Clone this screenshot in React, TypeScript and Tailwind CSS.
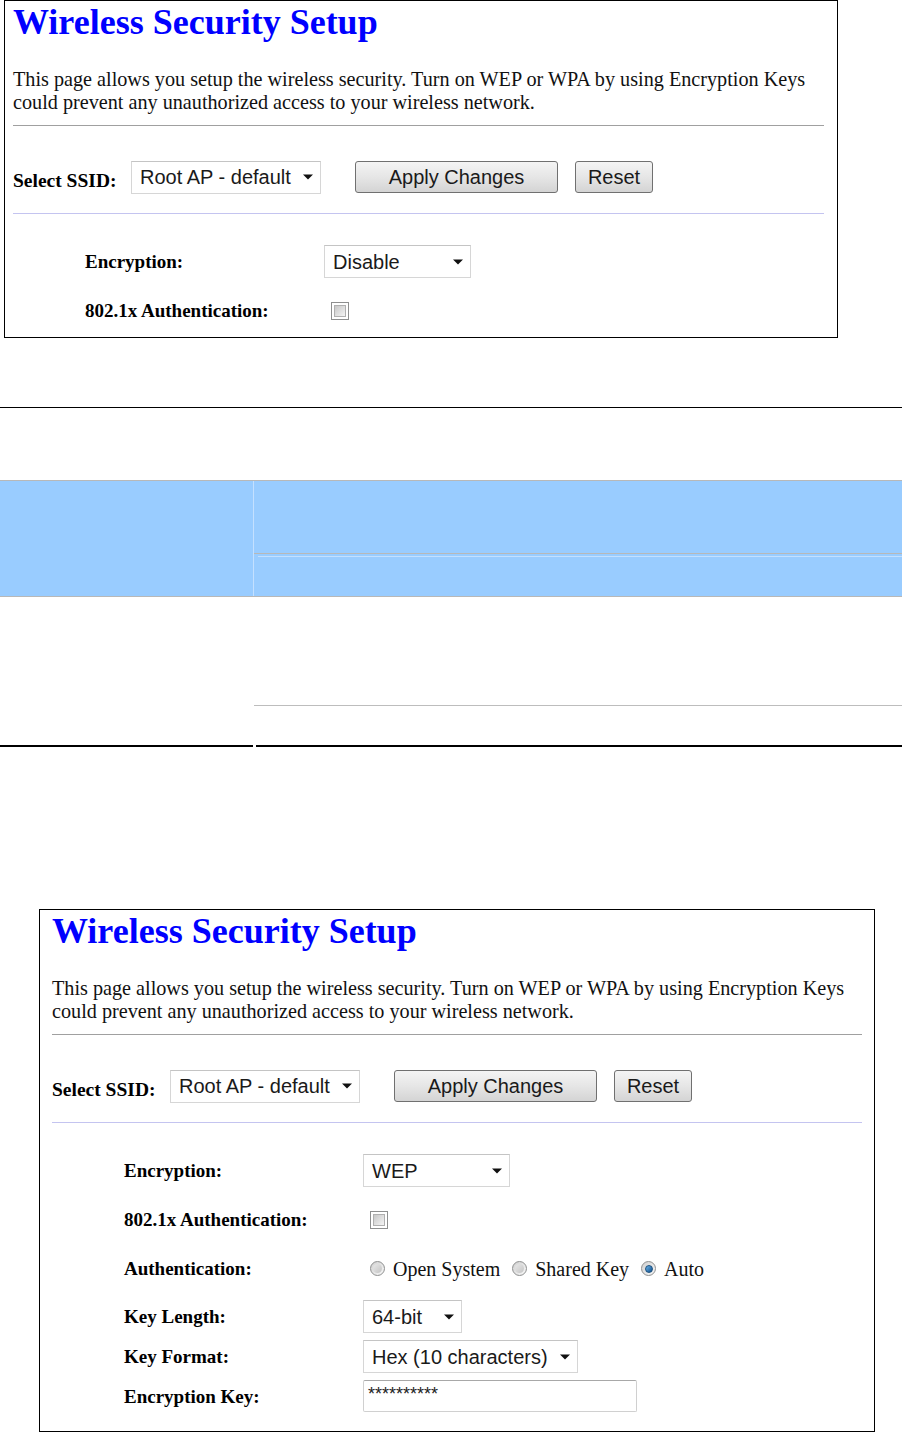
import React from "react";

const SERIF = "font-['Liberation_Serif','Times_New_Roman',serif]";
const SANS = "font-['Liberation_Sans',Arial,sans-serif]";

function Arrow() {
  return (
    <svg width="10" height="6" viewBox="0 0 10 6" className="shrink-0">
      <path d="M0 0.5h10L5 5.5z" fill="#111" />
    </svg>
  );
}

function Select({ text, w }: { text: string; w: string }) {
  return (
    <div
      className={`${w} h-[33px] flex items-center justify-between pl-[8px] pr-[7px] bg-white border border-[#d6d6d6] border-t-[#c4c4c4] ${SANS} text-[20px] text-[#1a1a1a] leading-none`}
    >
      <span className="whitespace-nowrap">{text}</span>
      <Arrow />
    </div>
  );
}

function Button({ text, w }: { text: string; w: string }) {
  return (
    <div
      className={`${w} h-[32px] flex items-center justify-center rounded-[3px] border border-[#707070] bg-gradient-to-b from-[#f4f4f4] via-[#e6e6e6] to-[#d4d4d4] ${SANS} text-[20px] text-[#1a1a1a] leading-none`}
    >
      {text}
    </div>
  );
}

function Checkbox() {
  return (
    <div className="w-[18px] h-[18px] border border-[#8e8f8f] bg-white p-[2px] ml-[7px]">
      <div className="w-full h-full border border-[#b0b0b0] bg-gradient-to-br from-[#c8c8c8] to-[#f4f4f4]" />
    </div>
  );
}

function Radio({ on }: { on?: boolean }) {
  return (
    <div className="w-[15px] h-[15px] rounded-full border border-[#8e8f8f] bg-gradient-to-br from-[#d0d0d0] to-[#f8f8f8] flex items-center justify-center shrink-0">
      {on ? (
        <div className="w-[8px] h-[8px] rounded-full bg-gradient-to-br from-[#6ab4ea] to-[#0d4f8c] border border-[#1c4f7c]" />
      ) : (
        <div className="w-[9px] h-[9px] rounded-full bg-gradient-to-br from-[#e8e8e8] to-[#c4c4c4]" />
      )}
    </div>
  );
}

function Label({ children }: { children: React.ReactNode }) {
  return (
    <div className={`ml-[72px] w-[239px] ${SERIF} font-bold text-[19px] text-black leading-none`}>
      {children}
    </div>
  );
}

function Panel({ wep }: { wep: boolean }) {
  const outer = wep
    ? "ml-[39px] w-[836px] h-[523px] mt-[162px]"
    : "ml-[4px] w-[834px] h-[338px]";
  const inner = wep ? "pl-[12px] pr-[12px]" : "pl-[8px] pr-[13px]";
  return (
    <div className={`${outer} border border-black bg-white`}>
      <div className={`${inner} flex flex-col`}>
        <h1
          className={`mt-[1px] ${SERIF} font-bold text-[36px] leading-[40px] text-[#0000ff]`}
        >
          Wireless Security Setup
        </h1>
        <p className={`mt-[26px] ${SERIF} text-[20.2px] leading-[23px] text-[#111] whitespace-nowrap`}>
          This page allows you setup the wireless security. Turn on WEP or WPA by using Encryption Keys
          <br />
          could prevent any unauthorized access to your wireless network.
        </p>
        <div className="mt-[11px] h-px bg-[#a0a0a0]" />
        <div className="mt-[34px] h-[34px] flex items-center">
          <div className={`w-[118px] pt-[7px] ${SERIF} font-bold text-[19.5px] text-black leading-none`}>
            Select SSID:
          </div>
          <Select text="Root AP - default" w="w-[190px]" />
          <div className="ml-[34px]">
            <Button text="Apply Changes" w="w-[203px]" />
          </div>
          <div className="ml-[17px]">
            <Button text="Reset" w="w-[78px]" />
          </div>
        </div>
        <div className="mt-[19px] h-px bg-[#c4c4f0]" />
        <div className="mt-[31px] h-[33px] flex items-center">
          <Label>Encryption:</Label>
          <Select text={wep ? "WEP" : "Disable"} w="w-[147px]" />
        </div>
        <div className="mt-[16px] h-[33px] flex items-center">
          <Label>802.1x Authentication:</Label>
          <Checkbox />
        </div>
        {wep && (
          <>
            <div className="mt-[16px] h-[33px] flex items-center">
              <Label>Authentication:</Label>
              <div className={`flex items-center ml-[7px] ${SERIF} text-[20px] text-[#111] leading-none`}>
                <Radio />
                <span className="ml-[8px]">Open System</span>
                <div className="ml-[12px]">
                  <Radio />
                </div>
                <span className="ml-[8px]">Shared Key</span>
                <div className="ml-[12px]">
                  <Radio on />
                </div>
                <span className="ml-[8px]">Auto</span>
              </div>
            </div>
            <div className="mt-[15px] h-[33px] flex items-center">
              <Label>Key Length:</Label>
              <Select text="64-bit" w="w-[99px]" />
            </div>
            <div className="mt-[7px] h-[33px] flex items-center">
              <Label>Key Format:</Label>
              <Select text="Hex (10 characters)" w="w-[215px]" />
            </div>
            <div className="mt-[7px] h-[32px] flex items-center">
              <Label>Encryption Key:</Label>
              <div
                className={`w-[274px] h-[32px] rounded-[2px] border border-[#d0d0d0] border-t-[#a8a8a8] bg-white pl-[4px] pt-[4px] ${SANS} text-[18px] leading-none text-[#222]`}
              >
                **********
              </div>
            </div>
          </>
        )}
      </div>
    </div>
  );
}

export default function App() {
  return (
    <div className="w-[902px] h-[1432px] bg-white overflow-hidden">
      <Panel wep={false} />
      <div className="mt-[69px] h-px bg-black" />
      <div className="mt-[72px] border-t border-[#b8b8b8]">
        <div className="grid grid-cols-[254px_1fr] bg-[#99ccff]">
          <div className="h-[115px] border-r border-[#c4e0ff]" />
          <div className="flex flex-col">
            <div className="h-[72px]" />
            <div className="h-px bg-[#b8b8b8]" />
            <div className="h-[2px]" />
            <div className="h-px bg-[#c4e0ff] ml-[4px]" />
            <div className="flex-1" />
          </div>
        </div>
        <div className="h-px bg-[#b8b8b8]" />
        <div className="grid grid-cols-[254px_1fr]">
          <div className="h-[150px] flex flex-col justify-end">
            <div className="h-[2px] bg-black mr-[1px]" />
          </div>
          <div className="h-[150px] flex flex-col">
            <div className="mt-[108px] h-px bg-[#bdbdbd]" />
            <div className="mt-auto h-[2px] bg-black ml-[2px]" />
          </div>
        </div>
      </div>
      <Panel wep={true} />
    </div>
  );
}
